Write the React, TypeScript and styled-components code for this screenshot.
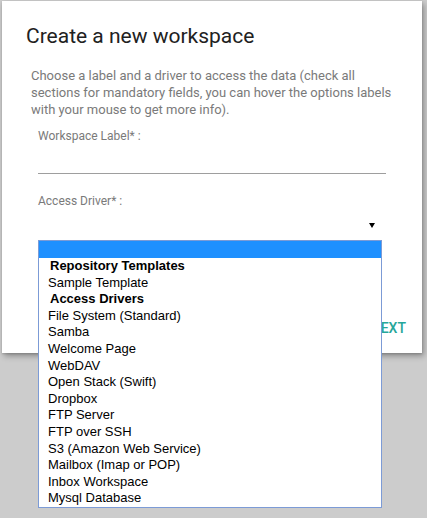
import styled, { createGlobalStyle } from 'styled-components';

const GlobalStyle = createGlobalStyle`
  html, body {
    margin: 0;
    padding: 0;
    background: #cccccc;
    font-family: Roboto, 'Noto Sans', sans-serif;
  }
`;

const Page = styled.div`
  width: 427px;
  height: 518px;
  padding: 1px 0 0 2px;
  box-sizing: border-box;
  overflow: hidden;
`;

const Dialog = styled.div`
  width: 420px;
  height: 352px;
  background: #ffffff;
  box-shadow: 2px 3px 6px rgba(0, 0, 0, 0.32), 0 1px 2px rgba(0, 0, 0, 0.15);
  display: flex;
  flex-direction: column;
`;

const Content = styled.div`
  padding: 23px 24px 0;
  display: flex;
  flex-direction: column;
`;

const Title = styled.h4`
  margin: 0;
  font-size: 21px;
  line-height: 25px;
  font-weight: 400;
  color: #212121;
`;

const Description = styled.p`
  margin: 18px 5px 0;
  font-size: 13px;
  line-height: 17px;
  color: #7a7a7a;
`;

const Fields = styled.div`
  margin: 11px 12px 0;
  display: flex;
  flex-direction: column;
`;

const Label = styled.label<{ $gap?: number }>`
  display: block;
  margin-top: ${({ $gap }) => $gap ?? 0}px;
  font-size: 12px;
  line-height: 14px;
  color: #7a7a7a;
`;

const TextInput = styled.input`
  display: block;
  width: 100%;
  height: 31px;
  box-sizing: border-box;
  border: 0;
  border-bottom: 1px solid #9e9e9e;
  outline: none;
  background: transparent;
  font: inherit;
`;

const SelectWrap = styled.div`
  position: relative;
  width: 344px;
`;

const SelectBox = styled.div`
  height: 32px;
  display: flex;
  align-items: center;
  justify-content: flex-end;
  padding-right: 7px;
`;

const Arrow = styled.span`
  width: 0;
  height: 0;
  margin-top: 2px;
  border-left: 3px solid transparent;
  border-right: 3px solid transparent;
  border-top: 5px solid #000000;
`;

const Dropdown = styled.ul`
  position: absolute;
  top: 100%;
  left: 0;
  width: 344px;
  box-sizing: border-box;
  margin: 0;
  padding: 0;
  list-style: none;
  background: #ffffff;
  border: 1px solid #7c9bd6;
  font-family: 'Liberation Sans', Arial, sans-serif;
  font-size: 13px;
  color: #000000;
  z-index: 2;
`;

const Option = styled.li<{ $group?: boolean; $selected?: boolean }>`
  height: ${({ $selected }) => ($selected ? '17px' : '16.6px')};
  line-height: ${({ $selected }) => ($selected ? '17px' : '16.6px')};
  padding-left: ${({ $group }) => ($group ? '11px' : '9px')};
  font-weight: ${({ $group }) => ($group ? 700 : 400)};
  background: ${({ $selected }) => ($selected ? '#1e90ff' : 'transparent')};
  white-space: nowrap;
`;

const Footer = styled.div`
  margin-top: auto;
  height: 50px;
  display: flex;
  align-items: center;
  justify-content: flex-end;
`;

const FlatButton = styled.button`
  height: 36px;
  padding: 0 16px;
  border: 0;
  background: transparent;
  font-family: Roboto, sans-serif;
  font-size: 14px;
  font-weight: 500;
  color: #26a69a;
  text-transform: uppercase;
  cursor: pointer;
`;

const groups: { label: string; options: string[] }[] = [
  { label: 'Repository Templates', options: ['Sample Template'] },
  {
    label: 'Access Drivers',
    options: [
      'File System (Standard)',
      'Samba',
      'Welcome Page',
      'WebDAV',
      'Open Stack (Swift)',
      'Dropbox',
      'FTP Server',
      'FTP over SSH',
      'S3 (Amazon Web Service)',
      'Mailbox (Imap or POP)',
      'Inbox Workspace',
      'Mysql Database',
    ],
  },
];

const App = () => {
  return (
    <>
      <GlobalStyle />
      <Page>
        <Dialog>
          <Content>
            <Title>Create a new workspace</Title>
            <Description>
              Choose a label and a driver to access the data (check all sections for mandatory fields, you can
              hover the options labels with your mouse to get more info).
            </Description>
            <Fields>
              <Label>Workspace Label* :</Label>
              <TextInput type="text" />
              <Label $gap={20}>Access Driver* :</Label>
              <SelectWrap>
                <SelectBox>
                  <Arrow />
                </SelectBox>
                <Dropdown>
                  <Option $selected>&nbsp;</Option>
                  {groups.map((g) => (
                    <>
                      <Option key={g.label} $group>
                        {g.label}
                      </Option>
                      {g.options.map((o) => (
                        <Option key={o}>{o}</Option>
                      ))}
                    </>
                  ))}
                </Dropdown>
              </SelectWrap>
            </Fields>
          </Content>
          <Footer>
            <FlatButton>Next</FlatButton>
          </Footer>
        </Dialog>
      </Page>
    </>
  );
};

export default App;
